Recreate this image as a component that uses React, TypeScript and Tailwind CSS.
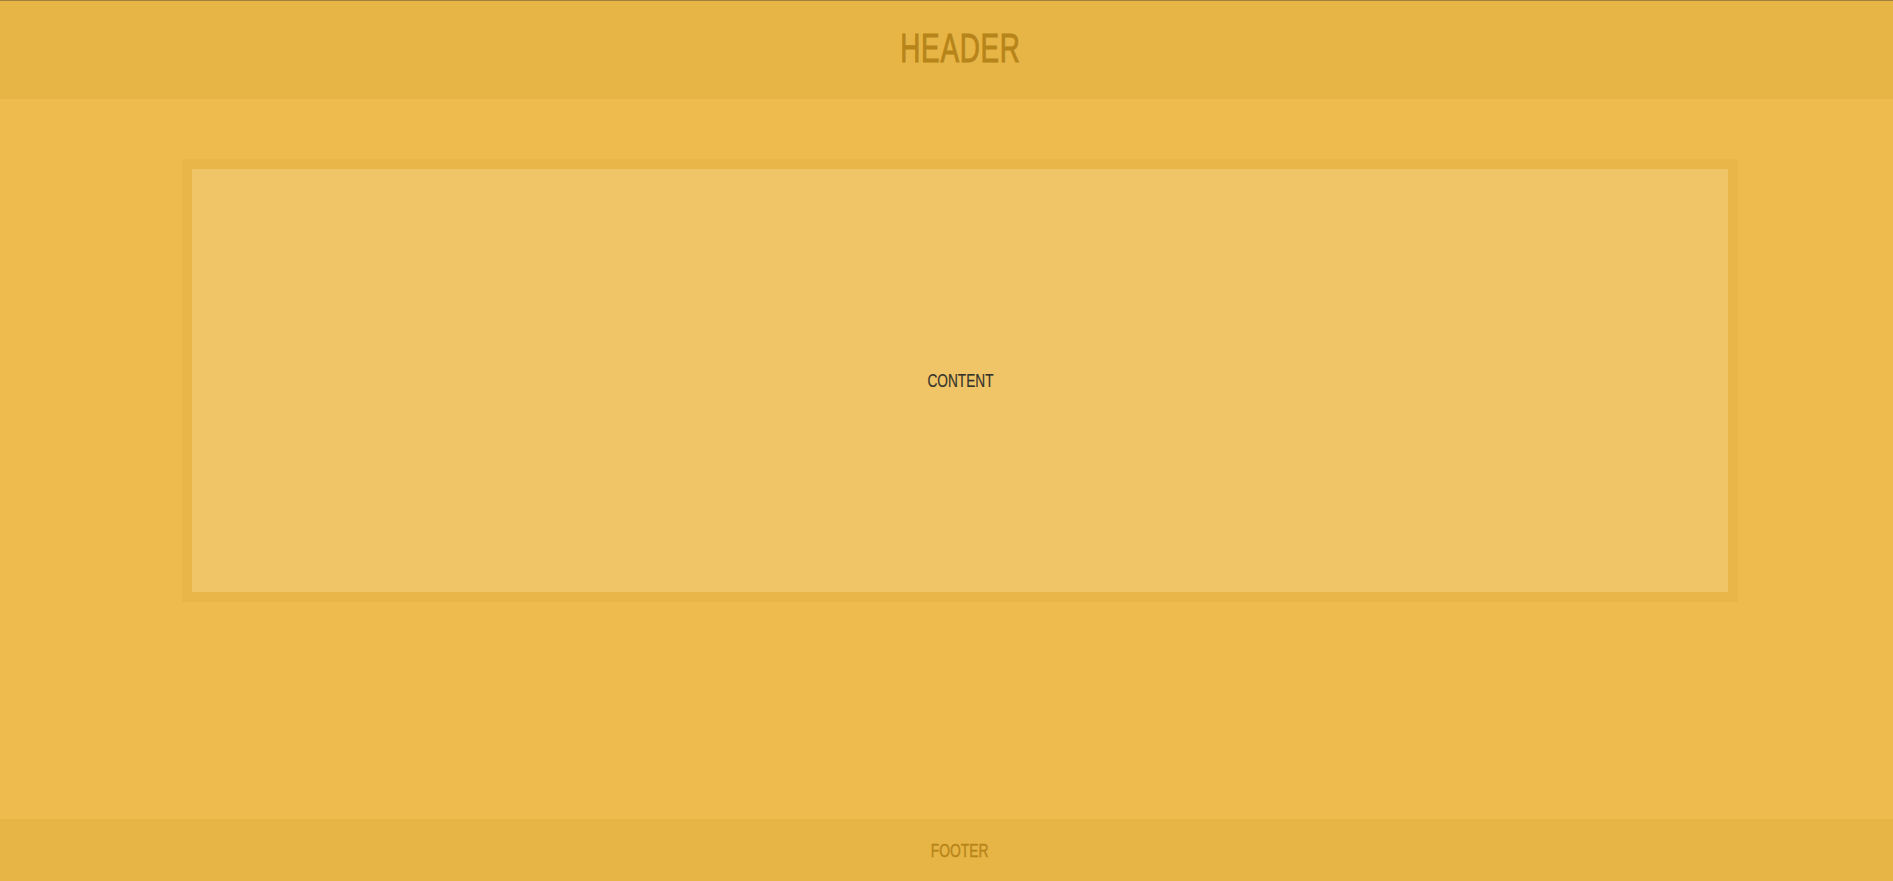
export default function App() {
  return (
    <div className="w-full h-screen overflow-hidden bg-[#eebb4e]">
      <div className="w-[1920px] h-[881px] flex flex-col font-['Liberation_Sans',sans-serif]">
        {/* header */}
        <header className="h-[99px] shrink-0 border-t border-[#a0803c] bg-[#e7b546] flex items-center justify-center">
          <h1 className="inline-block text-[41px] leading-none text-[#b78419] scale-x-[0.68] tracking-[1px] [-webkit-text-stroke:0.9px_#b78419] -mt-1">
            HEADER
          </h1>
        </header>

        {/* main */}
        <main className="flex-1 px-[182px] pt-[60px]">
          <div className="h-[443px] border-[10px] border-[#e9b649] bg-[#f0c567] flex items-center justify-center">
            <span className="inline-block text-[18px] leading-none text-[#34322c] scale-x-[0.76] [-webkit-text-stroke:0.2px_#34322c]">
              CONTENT
            </span>
          </div>
        </main>

        {/* footer */}
        <footer className="h-[62px] shrink-0 bg-[#e7b546] flex items-center justify-center">
          <span className="inline-block text-[19px] leading-none text-[#b78419] scale-x-[0.73] [-webkit-text-stroke:0.4px_#b78419]">
            FOOTER
          </span>
        </footer>
      </div>
    </div>
  );
}
